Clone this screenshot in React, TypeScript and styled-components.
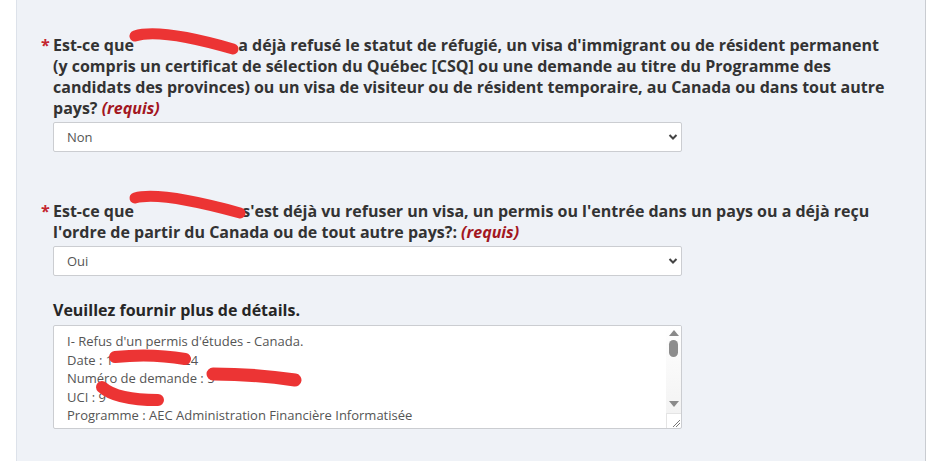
import styled, { createGlobalStyle } from "styled-components";

const GlobalStyle = createGlobalStyle`
  body {
    margin: 0;
    background: #ffffff;
    font-family: "Open Sans", "Noto Sans", Arial, sans-serif;
  }
`;

const Panel = styled.div`
  margin-left: 16px;
  width: 910px;
  min-height: 461px;
  box-sizing: border-box;
  background: #eff2f7;
  border-left: 1px solid #dde2ea;
  border-right: 1px solid #c9ccd1;
  padding: 35px 30px 0 24px;
`;

const Question = styled.div<{ $gap?: number }>`
  display: flex;
  margin-top: ${(p) => p.$gap ?? 0}px;
`;

const Asterisk = styled.span`
  flex: 0 0 12px;
  color: #c4262e;
  font-weight: 700;
  font-size: 16px;
  line-height: 21px;
`;

const Body = styled.div`
  flex: 1;
  display: flex;
  flex-direction: column;
`;

const Label = styled.div`
  font-size: 16px;
  line-height: 21px;
  font-weight: 700;
  color: #333333;
`;

const SubLabel = styled(Label)`
  margin-top: 24px;
  color: #262626;
`;

const Required = styled.em`
  color: #a3171f;
  font-style: italic;
`;

// blank slot in a line, its marker stroke drawn from the line box's top-left
const Redacted = styled.span<{ $w: number; $h: number }>`
  position: relative;
  display: inline-block;
  width: ${(p) => p.$w}px;
  height: ${(p) => p.$h}px;
  vertical-align: top;
`;

const Stroke = styled.svg`
  position: absolute;
  left: 0;
  top: 0;
  overflow: visible;
  pointer-events: none;
`;

const SelectWrap = styled.div`
  position: relative;
  width: 629px;
  margin-top: 3px;
`;

const Select = styled.select`
  appearance: none;
  width: 100%;
  height: 30px;
  box-sizing: border-box;
  border: 1px solid #cbcdd1;
  border-radius: 2px;
  background: #ffffff;
  padding: 0 30px 0 13px;
  font-family: "Open Sans", "Noto Sans", Arial, sans-serif;
  font-size: 13px;
  color: #555555;
`;

const Chevron = styled.svg`
  position: absolute;
  right: 4px;
  top: 11px;
  pointer-events: none;
`;

const TextBox = styled.div`
  display: flex;
  width: 629px;
  height: 104px;
  box-sizing: border-box;
  margin-top: 4px;
  border: 1px solid #cbcdd1;
  border-radius: 2px;
  background: #ffffff;
  overflow: hidden;
`;

const TextContent = styled.div`
  flex: 1;
  padding: 6px 0 0 13px;
  font-size: 13px;
  line-height: 18.5px;
  color: #555555;
  white-space: nowrap;
  overflow: hidden;
`;

const ScrollBar = styled.div`
  flex: 0 0 15px;
  display: flex;
  flex-direction: column;
  align-items: center;
`;

const Track = styled.div`
  flex: 1;
  width: 100%;
  display: flex;
  flex-direction: column;
  align-items: center;
  padding: 4px 0 6px;
  box-sizing: border-box;
  background: linear-gradient(#ffffff, #f3f3f3);
`;

const Arrow = styled.span<{ $down?: boolean }>`
  width: 0;
  height: 0;
  border-left: 5px solid transparent;
  border-right: 5px solid transparent;
  ${(p) =>
    p.$down
      ? "border-top: 6px solid #8a8a8a;"
      : "border-bottom: 6px solid #8a8a8a;"}
`;

const Thumb = styled.span`
  width: 9px;
  height: 17px;
  margin-top: 4px;
  border-radius: 5px;
  background: #8d8d8d;
`;

const Spacer = styled.span`
  flex: 1;
`;

const Grip = styled.div`
  width: 15px;
  height: 15px;
  box-sizing: border-box;
  border-top: 1px solid #e4e4e4;
  border-left: 1px solid #e4e4e4;
  display: flex;
  align-items: flex-end;
  justify-content: flex-end;
`;

function Mark({
  w,
  h,
  d,
  sw = 11,
}: {
  w: number;
  h: number;
  d: string;
  sw?: number;
}) {
  return (
    <Redacted $w={w} $h={h}>
      <Stroke width={w} height={h}>
        <path
          d={d}
          fill="none"
          stroke="#ec3434"
          strokeWidth={sw}
          strokeLinecap="round"
        />
      </Stroke>
    </Redacted>
  );
}

function Dropdown({ value }: { value: string }) {
  return (
    <SelectWrap>
      <Select defaultValue={value}>
        <option>Oui</option>
        <option>Non</option>
      </Select>
      <Chevron width="10" height="8" viewBox="0 0 10 8">
        <path
          d="M1.5 2 L5 5.5 L8.5 2"
          fill="none"
          stroke="#444"
          strokeWidth="2"
        />
      </Chevron>
    </SelectWrap>
  );
}

export default function App() {
  return (
    <>
      <GlobalStyle />
      <Panel>
        <Question>
          <Asterisk>*</Asterisk>
          <Body>
            <Label>
              Est-ce que <Mark w={96} h={21} d="M -3 1 Q 22 -7 95 14" /> a
              déjà refusé le statut de réfugié, un visa d'immigrant ou de
              résident permanent (y compris un certificat de sélection du
              Québec [CSQ] ou une demande au titre du Programme des candidats
              des provinces) ou un visa de visiteur ou de résident temporaire,
              au Canada ou dans tout autre pays? <Required>(requis)</Required>
            </Label>
            <Dropdown value="Non" />
          </Body>
        </Question>

        <Question $gap={49}>
          <Asterisk>*</Asterisk>
          <Body>
            <Label>
              Est-ce que <Mark w={100} h={21} d="M -3 -3 Q 22 -10 102 12" />{" "}
              s'est déjà vu refuser un visa, un permis ou l'entrée dans un pays
              ou a déjà reçu l'ordre de partir du Canada ou de tout autre
              pays?: <Required>(requis)</Required>
            </Label>
            <Dropdown value="Oui" />
            <SubLabel>Veuillez fournir plus de détails.</SubLabel>
            <TextBox>
              <TextContent>
                <div>I- Refus d'un permis d'études - Canada.</div>
                <div>
                  Date : 1
                  <Mark w={70} h={18.5} d="M 2 6 Q 38 2 72 8" sw={12} />
                  24
                </div>
                <div>
                  Numéro de demande : 5
                  <Mark w={80} h={18.5} d="M -2 5 Q 40 5 80 11" sw={13} />
                </div>
                <div>
                  UCI : 9
                  <Mark w={52} h={18.5} d="M -4 -1 Q 10 12 52 12" sw={12} />
                </div>
                <div>Programme : AEC Administration Financière Informatisée</div>
                <div>Motifs du refus : voir la lettre</div>
              </TextContent>
              <ScrollBar>
                <Track>
                  <Arrow />
                  <Thumb />
                  <Spacer />
                  <Arrow $down />
                </Track>
                <Grip>
                  <svg width="10" height="10" viewBox="0 0 10 10">
                    <path
                      d="M2 9 L9 2 M5 9 L9 5"
                      stroke="#777"
                      strokeWidth="1"
                    />
                  </svg>
                </Grip>
              </ScrollBar>
            </TextBox>
          </Body>
        </Question>
      </Panel>
    </>
  );
}
